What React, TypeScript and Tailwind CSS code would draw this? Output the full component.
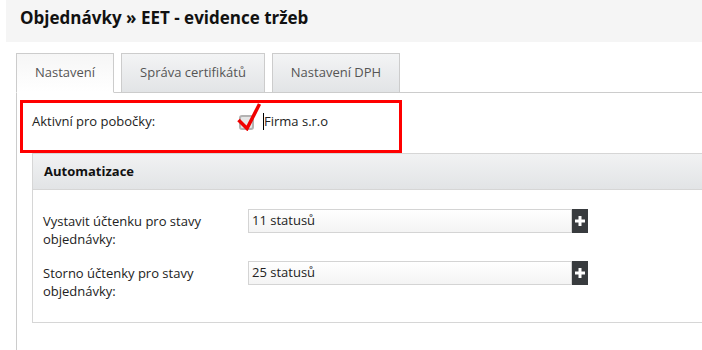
import React from "react";

function Tab({ label, active, w }: { label: string; active?: boolean; w: string }) {
  return (
    <div
      className={
        "h-[40px] -mb-px flex items-center justify-center border border-[#cccccc] text-[13px] text-[#555] " +
        w +
        " " +
        (active
          ? "bg-gradient-to-b from-[#f6f6f6] to-white border-b-white"
          : "bg-gradient-to-b from-[#f3f4f5] to-[#e2e4e6]")
      }
    >
      {label}
    </div>
  );
}

function Row({ l1, l2, value }: { l1: string; l2: string; value: string }) {
  return (
    <div className="flex items-start">
      <div className="w-[205px] pt-[3px] text-[13px] leading-[18px] text-[#222]">
        <div>{l1}</div>
        <div>{l2}</div>
      </div>
      <div className="flex">
        <div className="w-[324px] h-[24px] border border-[#d4d4d4] bg-gradient-to-b from-white to-[#f4f4f4] flex items-center pl-[3px] text-[13px] text-[#222]">
          {value}
        </div>
        <div className="w-[16px] h-[24px] bg-[#383b3e] flex items-center justify-center">
          <svg width="10" height="10" viewBox="0 0 10 10">
            <rect x="3.5" y="0" width="3" height="10" fill="white" />
            <rect x="0" y="3.5" width="10" height="3" fill="white" />
          </svg>
        </div>
      </div>
    </div>
  );
}

export default function App() {
  return (
    <div className="w-[702px] h-[350px] overflow-hidden bg-white font-['Open_Sans',sans-serif]">
      <div className="ml-[6px] h-[42px] bg-[#f5f5f5] pl-[14px] flex items-center">
        <h1 className="text-[17px] font-bold text-[#111] leading-none -mt-[8px]">
          Objednávky » EET - evidence tržeb
        </h1>
      </div>
      <div className="ml-[16px] mt-[11px]">
        <div className="flex gap-[7px] border-b border-[#cccccc]">
          <Tab label="Nastavení" active w="w-[98px]" />
          <Tab label="Správa certifikátů" w="w-[144px]" />
          <Tab label="Nastavení DPH" w="w-[128px]" />
        </div>
        <div className="border-l border-[#cccccc] h-[260px] pt-[7px]">
          <div className="relative ml-[3px] w-[382px] h-[53px] border-[3px] border-[#ff0000] flex items-start pt-[9px]">
            <div className="w-[216px] pl-[9px] text-[13px] text-[#222] leading-[18px]">Aktivní pro pobočky:</div>
            <div className="flex items-center">
              <div className="w-[15px] h-[15px] rounded-[3px] border-2 border-[#b3b3b3] bg-[#e6e6e6] mt-[2px]" />
              <div className="ml-[9px] w-px h-[17px] bg-black" />
              <div className="text-[13px] text-[#222] leading-[18px]">Firma s.r.o</div>
            </div>
            <svg className="absolute left-[214px] top-[0px]" width="26" height="28" viewBox="0 0 26 28">
              <polyline points="1.5,17 10,25.5 22.5,1" fill="none" stroke="#f00000" strokeWidth="3.5" strokeLinejoin="miter" />
            </svg>
          </div>
          <div className="ml-[15px] border border-[#d6d6d6] border-r-0">
            <div className="h-[36px] bg-gradient-to-b from-[#f1f2f3] to-[#e2e4e6] border-b border-[#d6d6d6] flex items-center pl-[11px] text-[13px] font-bold text-[#111]">
              Automatizace
            </div>
            <div className="pl-[10px] pt-[19px] pb-[22px] flex flex-col gap-[13px]">
              <Row l1="Vystavit účtenku pro stavy" l2="objednávky:" value="11 statusů" />
              <Row l1="Storno účtenky pro stavy" l2="objednávky:" value="25 statusů" />
            </div>
          </div>
        </div>
      </div>
    </div>
  );
}
